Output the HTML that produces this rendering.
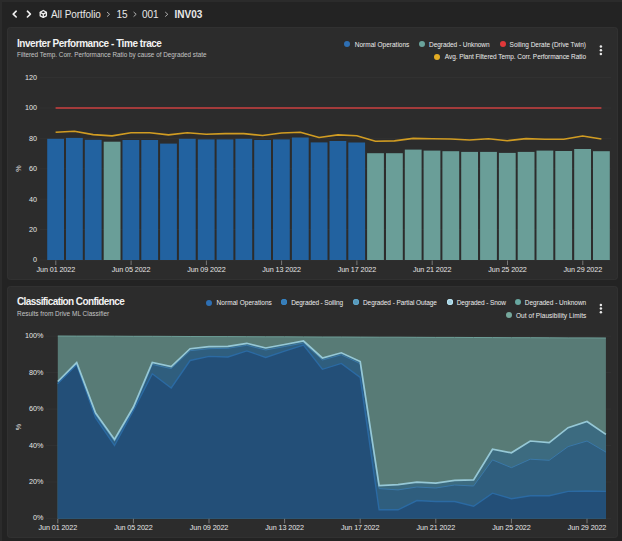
<!DOCTYPE html>
<html><head><meta charset="utf-8"><style>
html,body{margin:0;padding:0;width:622px;height:541px;overflow:hidden;background:#232323;}
body{position:relative;font-family:"Liberation Sans",sans-serif;color:#e6e6e6;}
.edge-l{position:absolute;left:0;top:0;width:2px;height:541px;background:#2b2b2b;}
.edge-t{position:absolute;left:0;top:0;width:622px;height:2px;background:#2b2b2b;}
.panel{position:absolute;left:7px;width:611px;background:#2c2c2c;border-radius:4px;box-shadow:inset 0 0 0 1px #313131;}
.crumb{position:absolute;top:9.3px;font-size:10px;color:#e8e8e8;white-space:nowrap;line-height:12px;}
.title{position:absolute;left:17px;font-size:10px;font-weight:bold;color:#f2f2f2;letter-spacing:-0.45px;white-space:nowrap;}
.sub{position:absolute;left:17px;font-size:6.4px;color:#c4c4c4;white-space:nowrap;}
.leg{position:absolute;font-size:6.5px;color:#ececec;white-space:nowrap;line-height:8px;}
.dot{position:absolute;width:6px;height:6px;border-radius:50%;}
svg{position:absolute;left:0;top:0;}
svg text{font-family:"Liberation Sans",sans-serif;fill:#e6e6e6;font-size:7.2px;}
</style></head><body>
<div class="edge-l"></div><div class="edge-t"></div>
<div class="panel" style="top:27px;height:253.2px"></div>
<div class="panel" style="top:285.8px;height:252.2px"></div>

<svg width="622" height="28" viewBox="0 0 622 28">
 <polyline points="16.2,11.2 13.2,14.1 16.2,17" fill="none" stroke="#f0f0f0" stroke-width="1.6" stroke-linecap="round" stroke-linejoin="round"/>
 <polyline points="27.4,11.2 30.4,14.1 27.4,17" fill="none" stroke="#f0f0f0" stroke-width="1.6" stroke-linecap="round" stroke-linejoin="round"/>
 <g fill="none" stroke="#f0f0f0" stroke-width="1.3" stroke-linejoin="round" stroke-linecap="round">
  <path d="M43.3,10.5 L46.4,12.3 L46.4,15.8 L43.3,17.4 L40.2,15.8 L40.2,12.3 Z"/>
  <path d="M40.4,12.4 L43.3,14.1 L46.2,12.4 M43.3,14.1 L43.3,17.2"/>
 </g>
 <polyline points="107,12 109.6,14.3 107,16.6" fill="none" stroke="#bbb" stroke-width="0.9"/>
 <polyline points="133.6,12 136.2,14.3 133.6,16.6" fill="none" stroke="#bbb" stroke-width="0.9"/>
 <polyline points="165.2,12 167.8,14.3 165.2,16.6" fill="none" stroke="#bbb" stroke-width="0.9"/>
</svg>
<div class="crumb" style="left:51px;letter-spacing:-0.06px">All Portfolio</div>
<div class="crumb" style="left:116.4px">15</div>
<div class="crumb" style="left:142px">001</div>
<div class="crumb" style="left:174.5px;font-weight:bold">INV03</div>

<div class="title" style="top:38px">Inverter Performance - Time trace</div>
<div class="sub" style="top:51.3px;font-size:6.35px">Filtered Temp. Corr. Performance Ratio by cause of Degraded state</div>

<div class="dot" style="left:344.4px;top:41.2px;background:#2e6fb3"></div><div class="leg" style="left:354.8px;top:40.7px">Normal Operations</div>
<div class="dot" style="left:418.7px;top:41.2px;background:#6aa39c"></div><div class="leg" style="left:429px;top:40.7px;letter-spacing:-0.05px">Degraded - Unknown</div>
<div class="dot" style="left:499.5px;top:41px;background:#e0383a"></div><div class="leg" style="left:509.6px;top:40.7px;letter-spacing:-0.03px">Soiling Derate (Drive Twin)</div>
<div class="dot" style="left:434.4px;top:53.8px;background:#e3ac24"></div><div class="leg" style="left:444.8px;top:53.4px;letter-spacing:-0.063px">Avg. Plant Filtered Temp. Corr. Performance Ratio</div>

<div class="title" style="top:295.6px;letter-spacing:-0.6px">Classification Confidence</div>
<div class="sub" style="top:309.8px;font-size:6.47px">Results from Drive ML Classifier</div>

<div class="dot" style="left:206.1px;top:299.6px;background:#2e6fb3"></div><div class="leg" style="left:216.6px;top:298.6px;letter-spacing:0.044px">Normal Operations</div>
<div class="dot" style="left:280.9px;top:299.4px;background:#3a7cb4;box-shadow:inset 0 0 0 0.9px #3484c6"></div><div class="leg" style="left:291.3px;top:298.6px;letter-spacing:-0.12px">Degraded - Soiling</div>
<div class="dot" style="left:352.5px;top:299.4px;background:#5898b8;box-shadow:inset 0 0 0 0.9px #5ea6cc"></div><div class="leg" style="left:363px;top:298.6px;letter-spacing:-0.08px">Degraded - Partial Outage</div>
<div class="dot" style="left:446.8px;top:299.4px;background:#a0cede;box-shadow:inset 0 0 0 0.9px #bfe6f2"></div><div class="leg" style="left:456.7px;top:298.6px;letter-spacing:-0.1px">Degraded - Snow</div>
<div class="dot" style="left:515px;top:299.2px;background:#68a7a0"></div><div class="leg" style="left:524.8px;top:298.6px">Degraded - Unknown</div>
<div class="dot" style="left:506px;top:312px;background:#76a89c"></div><div class="leg" style="left:516px;top:312.2px;letter-spacing:0.05px">Out of Plausibility Limits</div>

<svg width="622" height="541" viewBox="0 0 622 541">
 <g fill="#e8e8e8">
  <circle cx="600.9" cy="46.6" r="1.25"/><circle cx="600.9" cy="50.3" r="1.25"/><circle cx="600.9" cy="54.1" r="1.25"/>
  <circle cx="600.9" cy="304.9" r="1.25"/><circle cx="600.9" cy="308.6" r="1.25"/><circle cx="600.9" cy="312.3" r="1.25"/>
 </g>
 <line x1="40" y1="77.6" x2="611" y2="77.6" stroke="#363636" stroke-width="0.6"/><line x1="40" y1="108.0" x2="611" y2="108.0" stroke="#363636" stroke-width="0.6"/><line x1="40" y1="138.4" x2="611" y2="138.4" stroke="#363636" stroke-width="0.6"/><line x1="40" y1="168.8" x2="611" y2="168.8" stroke="#363636" stroke-width="0.6"/><line x1="40" y1="199.2" x2="611" y2="199.2" stroke="#363636" stroke-width="0.6"/><line x1="40" y1="229.6" x2="611" y2="229.6" stroke="#363636" stroke-width="0.6"/><line x1="40" y1="260.0" x2="611" y2="260.0" stroke="#363636" stroke-width="0.6"/>
 <rect x="47.2" y="138.8" width="16.8" height="121.2" fill="#2262a0"/><rect x="66.0" y="137.9" width="16.8" height="122.1" fill="#2262a0"/><rect x="84.8" y="139.8" width="16.8" height="120.2" fill="#2262a0"/><rect x="103.7" y="141.7" width="16.8" height="118.3" fill="#6a9e98"/><rect x="122.5" y="140.0" width="16.8" height="120.0" fill="#2262a0"/><rect x="141.3" y="140.0" width="16.8" height="120.0" fill="#2262a0"/><rect x="160.1" y="143.6" width="16.8" height="116.4" fill="#2262a0"/><rect x="178.9" y="138.8" width="16.8" height="121.2" fill="#2262a0"/><rect x="197.8" y="139.4" width="16.8" height="120.6" fill="#2262a0"/><rect x="216.6" y="139.4" width="16.8" height="120.6" fill="#2262a0"/><rect x="235.4" y="138.8" width="16.8" height="121.2" fill="#2262a0"/><rect x="254.2" y="140.0" width="16.8" height="120.0" fill="#2262a0"/><rect x="273.0" y="139.4" width="16.8" height="120.6" fill="#2262a0"/><rect x="291.9" y="137.5" width="16.8" height="122.5" fill="#2262a0"/><rect x="310.7" y="142.4" width="16.8" height="117.6" fill="#2262a0"/><rect x="329.5" y="141.0" width="16.8" height="119.0" fill="#2262a0"/><rect x="348.3" y="142.5" width="16.8" height="117.5" fill="#2262a0"/><rect x="367.1" y="153.2" width="16.8" height="106.8" fill="#6a9e98"/><rect x="386.0" y="153.2" width="16.8" height="106.8" fill="#6a9e98"/><rect x="404.8" y="149.6" width="16.8" height="110.4" fill="#6a9e98"/><rect x="423.6" y="150.6" width="16.8" height="109.4" fill="#6a9e98"/><rect x="442.4" y="151.2" width="16.8" height="108.8" fill="#6a9e98"/><rect x="461.2" y="151.9" width="16.8" height="108.1" fill="#6a9e98"/><rect x="480.1" y="151.9" width="16.8" height="108.1" fill="#6a9e98"/><rect x="498.9" y="152.9" width="16.8" height="107.1" fill="#6a9e98"/><rect x="517.7" y="151.9" width="16.8" height="108.1" fill="#6a9e98"/><rect x="536.5" y="150.6" width="16.8" height="109.4" fill="#6a9e98"/><rect x="555.3" y="151.0" width="16.8" height="109.0" fill="#6a9e98"/><rect x="574.2" y="149.0" width="16.8" height="111.0" fill="#6a9e98"/><rect x="593.0" y="151.2" width="16.8" height="108.8" fill="#6a9e98"/>
 <line x1="55.6" y1="108" x2="601.4" y2="108" stroke="#cc4040" stroke-width="1.6"/>
 <polyline points="55.6,132.3 74.4,131.2 93.2,134.6 112.1,135.9 130.9,132.7 149.7,132.7 168.5,134.9 187.3,132.7 206.2,134.3 225.0,133.6 243.8,133.6 262.6,135.5 281.4,133.0 300.3,132.3 319.1,137.5 337.9,134.9 356.7,135.8 375.5,141.3 394.4,140.9 413.2,138.4 432.0,138.8 450.8,139.0 469.6,140.0 488.5,138.8 507.3,140.7 526.1,138.6 544.9,139.3 563.7,139.3 582.6,136.0 601.4,139.0" fill="none" stroke="#d19c22" stroke-width="1.6" stroke-linejoin="round"/>
 <text x="37" y="79.9" text-anchor="end">120</text><text x="37" y="110.3" text-anchor="end">100</text><text x="37" y="140.7" text-anchor="end">80</text><text x="37" y="171.1" text-anchor="end">60</text><text x="37" y="201.5" text-anchor="end">40</text><text x="37" y="231.9" text-anchor="end">20</text><text x="37" y="262.3" text-anchor="end">0</text>
 <text transform="translate(20.8,168.5) rotate(-90)" text-anchor="middle">%</text>
 <line x1="55.8" y1="260.5" x2="55.8" y2="265" stroke="#9a9a9a" stroke-width="0.7"/><text x="55.8" y="271.8" text-anchor="middle" letter-spacing="-0.1">Jun 01 2022</text><line x1="131.1" y1="260.5" x2="131.1" y2="265" stroke="#9a9a9a" stroke-width="0.7"/><text x="131.1" y="271.8" text-anchor="middle" letter-spacing="-0.1">Jun 05 2022</text><line x1="206.4" y1="260.5" x2="206.4" y2="265" stroke="#9a9a9a" stroke-width="0.7"/><text x="206.4" y="271.8" text-anchor="middle" letter-spacing="-0.1">Jun 09 2022</text><line x1="281.6" y1="260.5" x2="281.6" y2="265" stroke="#9a9a9a" stroke-width="0.7"/><text x="281.6" y="271.8" text-anchor="middle" letter-spacing="-0.1">Jun 13 2022</text><line x1="356.9" y1="260.5" x2="356.9" y2="265" stroke="#9a9a9a" stroke-width="0.7"/><text x="356.9" y="271.8" text-anchor="middle" letter-spacing="-0.1">Jun 17 2022</text><line x1="432.2" y1="260.5" x2="432.2" y2="265" stroke="#9a9a9a" stroke-width="0.7"/><text x="432.2" y="271.8" text-anchor="middle" letter-spacing="-0.1">Jun 21 2022</text><line x1="507.5" y1="260.5" x2="507.5" y2="265" stroke="#9a9a9a" stroke-width="0.7"/><text x="507.5" y="271.8" text-anchor="middle" letter-spacing="-0.1">Jun 25 2022</text><line x1="582.8" y1="260.5" x2="582.8" y2="265" stroke="#9a9a9a" stroke-width="0.7"/><text x="582.8" y="271.8" text-anchor="middle" letter-spacing="-0.1">Jun 29 2022</text>
 <line x1="46" y1="336.2" x2="611" y2="336.2" stroke="#363636" stroke-width="0.6"/><line x1="46" y1="372.6" x2="611" y2="372.6" stroke="#363636" stroke-width="0.6"/><line x1="46" y1="409.1" x2="611" y2="409.1" stroke="#363636" stroke-width="0.6"/><line x1="46" y1="445.5" x2="611" y2="445.5" stroke="#363636" stroke-width="0.6"/><line x1="46" y1="482.0" x2="611" y2="482.0" stroke="#363636" stroke-width="0.6"/><line x1="46" y1="518.4" x2="611" y2="518.4" stroke="#363636" stroke-width="0.6"/>
 <polygon points="57.8,336.0 76.7,336.1 95.6,336.1 114.5,336.2 133.4,336.3 152.3,336.3 171.2,336.4 190.1,336.5 209.0,336.6 227.9,336.6 246.8,336.7 265.7,336.8 284.6,336.8 303.5,336.9 322.4,337.0 341.3,337.0 360.2,337.1 379.1,337.2 398.0,337.2 416.9,337.3 435.8,337.4 454.7,337.4 473.6,337.5 492.5,337.6 511.4,337.7 530.3,337.7 549.2,337.8 568.1,337.9 587.0,337.9 605.9,338.0 605.9,518.4 57.8,518.4" fill="#587b76"/>
<polygon points="57.8,381.5 76.7,362.6 95.6,413.0 114.5,439.4 133.4,407.0 152.3,362.5 171.2,366.6 190.1,348.7 209.0,346.7 227.9,346.3 246.8,343.3 265.7,348.0 284.6,344.5 303.5,341.0 322.4,358.0 341.3,352.8 360.2,361.6 379.1,485.7 398.0,484.7 416.9,482.2 435.8,483.2 454.7,480.3 473.6,479.9 492.5,449.2 511.4,452.8 530.3,441.0 549.2,442.6 568.1,427.7 587.0,421.5 605.9,434.4 605.9,518.4 57.8,518.4" fill="#3c6b80"/>
<polygon points="57.8,383.5 76.7,364.6 95.6,415.0 114.5,441.4 133.4,409.0 152.3,364.5 171.2,368.6 190.1,350.7 209.0,348.7 227.9,348.3 246.8,345.3 265.7,350.0 284.6,346.5 303.5,343.0 322.4,360.0 341.3,354.8 360.2,363.6 379.1,488.6 398.0,489.9 416.9,487.0 435.8,488.0 454.7,485.0 473.6,486.0 492.5,459.9 511.4,467.7 530.3,459.2 549.2,460.3 568.1,446.6 587.0,441.0 605.9,452.1 605.9,518.4 57.8,518.4" fill="#2f5e7e"/>
<polygon points="57.8,383.5 76.7,364.6 95.6,418.0 114.5,445.5 133.4,410.5 152.3,373.7 171.2,388.0 190.1,360.5 209.0,356.4 227.9,357.0 246.8,350.9 265.7,357.4 284.6,351.2 303.5,345.0 322.4,369.3 341.3,363.4 360.2,377.5 379.1,509.8 398.0,509.8 416.9,500.5 435.8,501.5 454.7,501.5 473.6,506.3 492.5,493.2 511.4,498.7 530.3,495.8 549.2,495.8 568.1,491.4 587.0,491.0 605.9,491.4 605.9,518.4 57.8,518.4" fill="#234f78"/>
<polyline points="57.8,336.0 76.7,336.1 95.6,336.1 114.5,336.2 133.4,336.3 152.3,336.3 171.2,336.4 190.1,336.5 209.0,336.6 227.9,336.6 246.8,336.7 265.7,336.8 284.6,336.8 303.5,336.9 322.4,337.0 341.3,337.0 360.2,337.1 379.1,337.2 398.0,337.2 416.9,337.3 435.8,337.4 454.7,337.4 473.6,337.5 492.5,337.6 511.4,337.7 530.3,337.7 549.2,337.8 568.1,337.9 587.0,337.9 605.9,338.0" fill="none" stroke="#6e9f98" stroke-width="1"/>
<polyline points="57.8,383.5 76.7,364.6 95.6,415.0 114.5,441.4 133.4,409.0 152.3,364.5 171.2,368.6 190.1,350.7 209.0,348.7 227.9,348.3 246.8,345.3 265.7,350.0 284.6,346.5 303.5,343.0 322.4,360.0 341.3,354.8 360.2,363.6 379.1,488.6 398.0,489.9 416.9,487.0 435.8,488.0 454.7,485.0 473.6,486.0 492.5,459.9 511.4,467.7 530.3,459.2 549.2,460.3 568.1,446.6 587.0,441.0 605.9,452.1" fill="none" stroke="#3a78a8" stroke-width="1"/>
<polyline points="57.8,383.5 76.7,364.6 95.6,418.0 114.5,445.5 133.4,410.5 152.3,373.7 171.2,388.0 190.1,360.5 209.0,356.4 227.9,357.0 246.8,350.9 265.7,357.4 284.6,351.2 303.5,345.0 322.4,369.3 341.3,363.4 360.2,377.5 379.1,509.8 398.0,509.8 416.9,500.5 435.8,501.5 454.7,501.5 473.6,506.3 492.5,493.2 511.4,498.7 530.3,495.8 549.2,495.8 568.1,491.4 587.0,491.0 605.9,491.4" fill="none" stroke="#2b6aa3" stroke-width="1.4"/>
<polyline points="57.8,381.5 76.7,362.6 95.6,413.0 114.5,439.4 133.4,407.0 152.3,362.5 171.2,366.6 190.1,348.7 209.0,346.7 227.9,346.3 246.8,343.3 265.7,348.0 284.6,344.5 303.5,341.0 322.4,358.0 341.3,352.8 360.2,361.6 379.1,485.7 398.0,484.7 416.9,482.2 435.8,483.2 454.7,480.3 473.6,479.9 492.5,449.2 511.4,452.8 530.3,441.0 549.2,442.6 568.1,427.7 587.0,421.5 605.9,434.4" fill="none" stroke="#96c8d6" stroke-width="1.7"/>

 <text x="43.3" y="338.2" text-anchor="end">100%</text><text x="43.3" y="374.6" text-anchor="end">80%</text><text x="43.3" y="411.1" text-anchor="end">60%</text><text x="43.3" y="447.5" text-anchor="end">40%</text><text x="43.3" y="484.0" text-anchor="end">20%</text><text x="43.3" y="520.4" text-anchor="end">0%</text>
 <text transform="translate(20.8,427) rotate(-90)" text-anchor="middle">%</text>
 <line x1="57.8" y1="518.8" x2="57.8" y2="523.4" stroke="#9a9a9a" stroke-width="0.7"/><text x="57.8" y="530" text-anchor="middle" letter-spacing="-0.1">Jun 01 2022</text><line x1="133.4" y1="518.8" x2="133.4" y2="523.4" stroke="#9a9a9a" stroke-width="0.7"/><text x="133.4" y="530" text-anchor="middle" letter-spacing="-0.1">Jun 05 2022</text><line x1="209.0" y1="518.8" x2="209.0" y2="523.4" stroke="#9a9a9a" stroke-width="0.7"/><text x="209.0" y="530" text-anchor="middle" letter-spacing="-0.1">Jun 09 2022</text><line x1="284.6" y1="518.8" x2="284.6" y2="523.4" stroke="#9a9a9a" stroke-width="0.7"/><text x="284.6" y="530" text-anchor="middle" letter-spacing="-0.1">Jun 13 2022</text><line x1="360.2" y1="518.8" x2="360.2" y2="523.4" stroke="#9a9a9a" stroke-width="0.7"/><text x="360.2" y="530" text-anchor="middle" letter-spacing="-0.1">Jun 17 2022</text><line x1="435.8" y1="518.8" x2="435.8" y2="523.4" stroke="#9a9a9a" stroke-width="0.7"/><text x="435.8" y="530" text-anchor="middle" letter-spacing="-0.1">Jun 21 2022</text><line x1="511.4" y1="518.8" x2="511.4" y2="523.4" stroke="#9a9a9a" stroke-width="0.7"/><text x="511.4" y="530" text-anchor="middle" letter-spacing="-0.1">Jun 25 2022</text><line x1="587.0" y1="518.8" x2="587.0" y2="523.4" stroke="#9a9a9a" stroke-width="0.7"/><text x="587.0" y="530" text-anchor="middle" letter-spacing="-0.1">Jun 29 2022</text>
</svg>
</body></html>
